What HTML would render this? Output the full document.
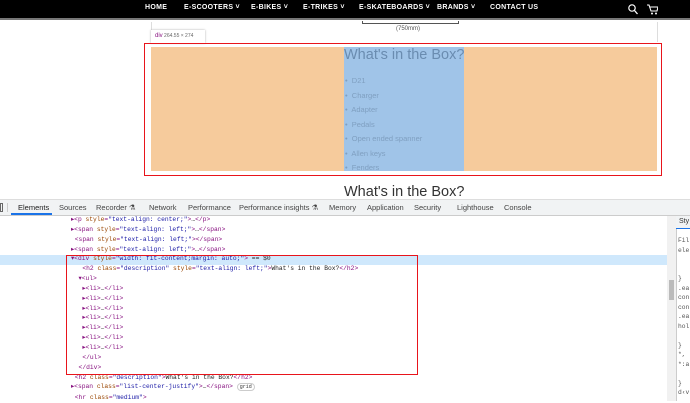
<!DOCTYPE html>
<html><head><meta charset="utf-8"><style>
*{margin:0;padding:0;box-sizing:border-box}
body{width:690px;height:401px;overflow:hidden;background:#fff;font-family:"Liberation Sans",sans-serif;position:relative}
.a{position:absolute;white-space:nowrap}
.nav{left:0;top:0;width:690px;height:20px;background:#000;border-bottom:2px solid #777}
.nav span{position:absolute;top:4px;color:#fff;font-size:7px;font-weight:bold;letter-spacing:.3px}
.code{font-family:"Liberation Mono",monospace;font-size:6.3px;color:#881280}
.code .at{color:#994500}.code .v{color:#1a1aa6}.code .t{color:#222}
.tab{top:203px;font-size:7.5px;color:#444}
</style></head><body>
<div class="a nav">
<span style="left:145px">HOME</span>
<span style="left:184px">E-SCOOTERS ˅</span>
<span style="left:251px">E-BIKES ˅</span>
<span style="left:303px">E-TRIKES ˅</span>
<span style="left:359px">E-SKATEBOARDS ˅</span>
<span style="left:437px">BRANDS ˅</span>
<span style="left:490px">CONTACT US</span>
<svg style="position:absolute;left:628px;top:4px" width="10" height="11"><circle cx="4" cy="4" r="3.2" stroke="#fff" stroke-width="1.2" fill="none"/><line x1="6.5" y1="6.5" x2="9.5" y2="10" stroke="#fff" stroke-width="1.3"/></svg>
<svg style="position:absolute;left:647px;top:4px" width="11" height="11"><path d="M0 1h2l2 6h6l1-4H3" stroke="#fff" stroke-width="1.1" fill="none"/><circle cx="5" cy="9.5" r="1" fill="#fff"/><circle cx="9" cy="9.5" r="1" fill="#fff"/></svg>
</div>
<div class="a" style="left:151px;top:22px;width:1px;height:20px;background:#ddd"></div>
<div class="a" style="left:657px;top:22px;width:1px;height:20px;background:#ddd"></div>
<div class="a" style="left:362px;top:21px;width:97px;height:3px;border-bottom:1px solid #555;border-left:1px solid #555;border-right:1px solid #555"></div>
<div class="a" style="left:396px;top:26px;font-size:6px;color:#555">(750mm)</div>
<div class="a" style="left:151px;top:30px;width:54px;height:13px;background:#fff;box-shadow:0 0 2px #aaa;font-size:5px;color:#666;padding:3px 4px"><b style="color:#881280;font-size:6px;font-weight:normal">div</b> 264.55 × 274</div>
<div class="a" style="left:144px;top:43px;width:518px;height:133px;border:1px solid #e8141b"></div>
<div class="a" style="left:151px;top:47px;width:506px;height:124px;background:#f6cb9c"></div>
<div class="a" style="left:344px;top:47px;width:120px;height:124px;background:#a0c4e8"></div>
<div class="a" style="left:344px;top:47px;font-size:14.5px;color:#6a8cb0">What's in the Box?</div>
<div class="a" style="left:345px;top:74px;font-size:7.5px;color:#7f9fc0;line-height:14.5px">
<div>•&nbsp; D21</div><div>•&nbsp; Charger</div><div>•&nbsp; Adapter</div><div>•&nbsp; Pedals</div><div>•&nbsp; Open ended spanner</div><div>•&nbsp; Allen keys</div><div>•&nbsp; Fenders</div></div>
<div class="a" style="left:344px;top:184px;font-size:14.5px;color:#333">What's in the Box?</div>
<div class="a" style="left:0;top:199px;width:690px;height:17px;background:#f1f3f4;border-bottom:1px solid #ccc;border-top:1px solid #ddd"></div>
<div class="a" style="left:0;top:203px;width:3px;height:9px;border:1px solid #666"></div>
<div class="a" style="left:7px;top:203px;width:1px;height:9px;background:#ccc"></div>
<div class="a" style="left:11px;top:213px;width:41px;height:2px;background:#1a73e8"></div>
<div class="a tab" style="left:18px;color:#222">Elements</div>
<div class="a tab" style="left:59px">Sources</div>
<div class="a tab" style="left:96px">Recorder ⚗</div>
<div class="a tab" style="left:149px">Network</div>
<div class="a tab" style="left:188px">Performance</div>
<div class="a tab" style="left:239px">Performance insights ⚗</div>
<div class="a tab" style="left:329px">Memory</div>
<div class="a tab" style="left:367px">Application</div>
<div class="a tab" style="left:414px">Security</div>
<div class="a tab" style="left:457px">Lighthouse</div>
<div class="a tab" style="left:504px">Console</div>
<div class="a" style="left:0;top:255px;width:667px;height:10px;background:#cfe8fc"></div>
<div class="a" style="left:667px;top:216px;width:9px;height:185px;background:#f1f1f1"></div>
<div class="a" style="left:669px;top:280px;width:5px;height:20px;background:#bbb"></div>
<div class="a" style="left:676px;top:216px;width:14px;height:185px;background:#fff;border-left:1px solid #ccc"></div>
<div class="a" style="left:676px;top:216px;width:14px;height:13px;background:#f1f3f4;border-bottom:1px solid #1a73e8;font-size:7px;color:#333;padding:2px 3px">Sty</div>
<div class="a code" style="left:678px;top:236px;color:#555;line-height:9.5px">Filt<br>ele<br>&nbsp;&nbsp;<br>&nbsp;<br>}<br>.ea<br>con<br>con<br>.ea<br>hol<br><br>}<br>*,<br>*:a<br><br>}<br>d‹v</div>
<div class="a code" style="left:71px;top:215px;line-height:9.85px">
<div>▸&lt;p <span class="at">style</span>=<span class="v">"text-align: center;"</span>&gt;<span class="t">…</span>&lt;/p&gt;</div>
<div>▸&lt;span <span class="at">style</span>=<span class="v">"text-align: left;"</span>&gt;<span class="t">…</span>&lt;/span&gt;</div>
<div>&nbsp;&lt;span <span class="at">style</span>=<span class="v">"text-align: left;"</span>&gt;&lt;/span&gt;</div>
<div>▸&lt;span <span class="at">style</span>=<span class="v">"text-align: left;"</span>&gt;<span class="t">…</span>&lt;/span&gt;</div>
<div>▾&lt;div <span class="at">style</span>=<span class="v">"width: fit-content;margin: auto;"</span>&gt; <span class="t">== $0</span></div>
<div>&nbsp;&nbsp;&nbsp;&lt;h2 <span class="at">class</span>=<span class="v">"description"</span> <span class="at">style</span>=<span class="v">"text-align: left;"</span>&gt;<span class="t">What's in the Box?</span>&lt;/h2&gt;</div>
<div>&nbsp;&nbsp;▾&lt;ul&gt;</div>
<div>&nbsp;&nbsp;&nbsp;▸&lt;li&gt;<span class="t">…</span>&lt;/li&gt;</div>
<div>&nbsp;&nbsp;&nbsp;▸&lt;li&gt;<span class="t">…</span>&lt;/li&gt;</div>
<div>&nbsp;&nbsp;&nbsp;▸&lt;li&gt;<span class="t">…</span>&lt;/li&gt;</div>
<div>&nbsp;&nbsp;&nbsp;▸&lt;li&gt;<span class="t">…</span>&lt;/li&gt;</div>
<div>&nbsp;&nbsp;&nbsp;▸&lt;li&gt;<span class="t">…</span>&lt;/li&gt;</div>
<div>&nbsp;&nbsp;&nbsp;▸&lt;li&gt;<span class="t">…</span>&lt;/li&gt;</div>
<div>&nbsp;&nbsp;&nbsp;▸&lt;li&gt;<span class="t">…</span>&lt;/li&gt;</div>
<div>&nbsp;&nbsp;&nbsp;&lt;/ul&gt;</div>
<div>&nbsp;&nbsp;&lt;/div&gt;</div>
<div>&nbsp;&lt;h2 <span class="at">class</span>=<span class="v">"description"</span>&gt;<span class="t">What's in the Box?</span>&lt;/h2&gt;</div>
<div>▸&lt;span <span class="at">class</span>=<span class="v">"list-center-justify"</span>&gt;<span class="t">…</span>&lt;/span&gt; <span style="border:1px solid #ccc;border-radius:4px;color:#333;font-size:5px;padding:0 2px">grid</span></div>
<div>&nbsp;&lt;hr <span class="at">class</span>=<span class="v">"medium"</span>&gt;</div>
</div>
<div class="a" style="left:66px;top:255px;width:352px;height:120px;border:1.5px solid #e8141b"></div>
</body></html>
